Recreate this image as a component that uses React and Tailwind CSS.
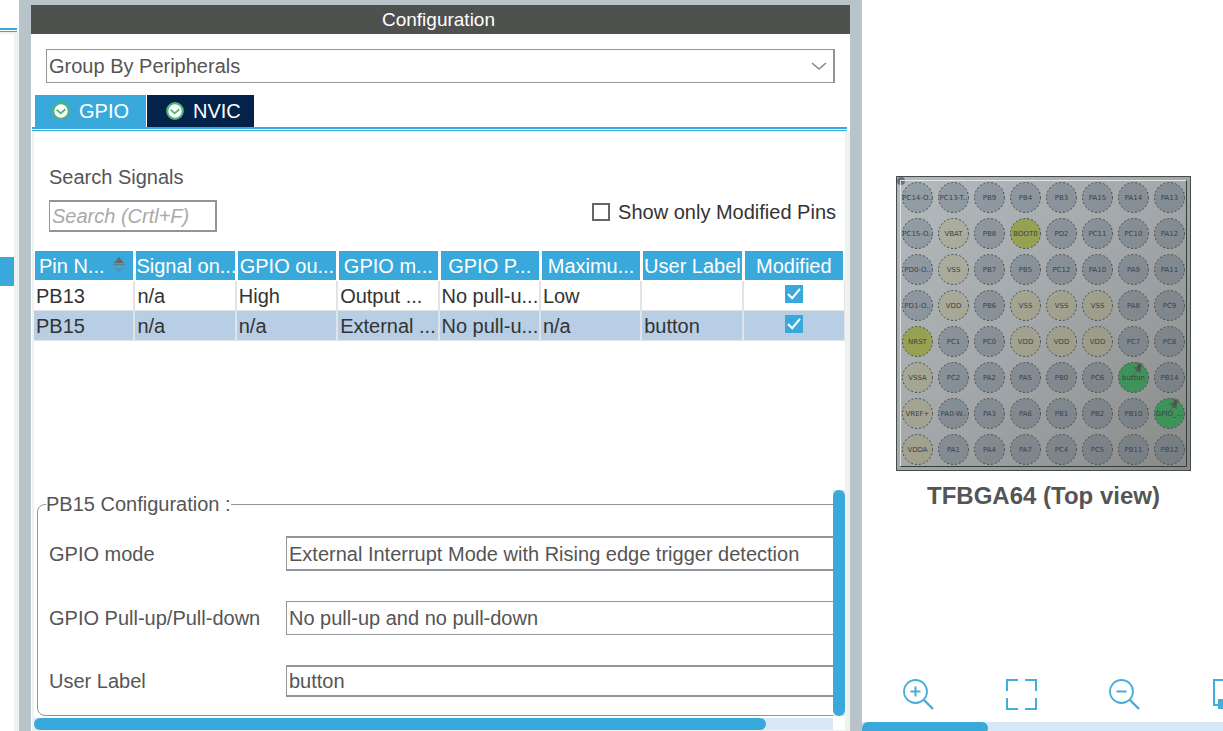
import { useState } from 'react';

// Signal table
const columns = ['Pin N...', 'Signal on...', 'GPIO ou...', 'GPIO m...', 'GPIO P...', 'Maximu...', 'User Label', 'Modified'];

const rows = [
  { cells: ['PB13', 'n/a', 'High', 'Output ...', 'No pull-u...', 'Low', ''], selected: false },
  { cells: ['PB15', 'n/a', 'n/a', 'External ...', 'No pull-u...', 'n/a', 'button'], selected: true },
];

// Ball map of the package, row by row
const balls = [
  ['PC14-O..', 'PC13-T..', 'PB9', 'PB4', 'PB3', 'PA15', 'PA14', 'PA13'],
  ['PC15-O..', 'VBAT', 'PB8', 'BOOT0', 'PD2', 'PC11', 'PC10', 'PA12'],
  ['PD0-O..', 'VSS', 'PB7', 'PB5', 'PC12', 'PA10', 'PA9', 'PA11'],
  ['PD1-O..', 'VDD', 'PB6', 'VSS', 'VSS', 'VSS', 'PA8', 'PC9'],
  ['NRST', 'PC1', 'PC0', 'VDD', 'VDD', 'VDD', 'PC7', 'PC8'],
  ['VSSA', 'PC2', 'PA2', 'PA5', 'PB0', 'PC6', 'button', 'PB14'],
  ['VREF+', 'PA0-W..', 'PA3', 'PA6', 'PB1', 'PB2', 'PB10', 'GPIO_...'],
  ['VDDA', 'PA1', 'PA4', 'PA7', 'PC4', 'PC5', 'PB11', 'PB12'],
];

function ballFill(name) {
  if (name === 'button' || name.startsWith('GPIO')) return '#3f9259';
  if (name === 'BOOT0' || name === 'NRST') return '#96a251';
  if (name.startsWith('V')) return 'url(#power)';
  return 'url(#io)';
}

function CheckBadge() {
  return (
    <svg width="18" height="18" viewBox="0 0 18 18" aria-hidden="true">
      <circle cx="9" cy="9" r="7.8" fill="#fff" stroke="#4fb477" strokeWidth="2.2" />
      <path d="M4.6 7.6 L8.6 11.4 L13.4 7.2" fill="none" stroke="#4fb477" strokeWidth="1.8" />
    </svg>
  );
}

function SortIcon() {
  return (
    <svg width="12" height="17" viewBox="0 0 12 17" aria-hidden="true">
      <path d="M6 0 L11 6 H1 Z" fill="#66696a" />
      <path d="M0 7.5 H12" stroke="#5f7f90" strokeWidth="1.4" />
      <path d="M1 11 H11 L6 16.5 Z" fill="#4b98bd" />
    </svg>
  );
}

function TickBox({ label }) {
  return (
    <label className="inline-flex relative align-middle -mt-[6px]">
      <input type="checkbox" defaultChecked aria-label={label} className="appearance-none w-[18px] h-[18px] bg-[#39a9dc]" />
      <svg className="absolute inset-0 pointer-events-none" width="18" height="18" viewBox="0 0 18 18" aria-hidden="true">
        <path d="M3 9 L7.2 13.2 L15 3.8" fill="none" stroke="#fff" strokeWidth="2" />
      </svg>
    </label>
  );
}

function Pushpin({ x, y }) {
  return (
    <g transform={`translate(${x} ${y})`}>
      <path d="M-5.5 7 L-1.5 2" stroke="#55705f" strokeWidth="1" />
      <path d="M-4.5 -2 L-1 -1.5 L0 -5 L-0.5 -6.5 L5 -4.5 L3.5 -3 L2.5 0 L3 3.5 L-1 2.5 Z" fill="#4c5350" />
      <path d="M-0.5 -6.5 L5 -4.5" stroke="#6b716e" strokeWidth="1.4" />
      <path d="M-4.5 -2 L3 3" stroke="#626966" strokeWidth="1" />
    </g>
  );
}

function Chip() {
  return (
    <svg width="295" height="295" viewBox="0 0 295 295" role="img" aria-label="TFBGA64 package">
      <defs>
        <linearGradient id="body" x1="0" y1="0" x2="1" y2="1">
          <stop offset="0" stopColor="#b3babd" />
          <stop offset="0.5" stopColor="#a3a7a9" />
          <stop offset="1" stopColor="#888988" />
        </linearGradient>
        <linearGradient id="io" gradientUnits="userSpaceOnUse" x1="0" y1="0" x2="295" y2="295">
          <stop offset="0" stopColor="#959fa8" />
          <stop offset="1" stopColor="#757c80" />
        </linearGradient>
        <linearGradient id="power" gradientUnits="userSpaceOnUse" x1="0" y1="0" x2="295" y2="295">
          <stop offset="0" stopColor="#b2b4a5" />
          <stop offset="1" stopColor="#8f8e77" />
        </linearGradient>
      </defs>
      <rect x="0.5" y="0.5" width="294" height="294" fill="url(#body)" stroke="#454a4b" />
      <circle cx="5" cy="5" r="4" fill="#697174" />
      <path d="M4.5 290 V4.5 H290" fill="none" stroke="#e1e5e6" />
      <path d="M4.5 290.5 H290.5 V4.5" fill="none" stroke="#363b3c" />
      {balls.map((line, j) =>
        line.map((name, i) => (
          <g key={`${i}-${j}`}>
            <circle cx={21.5 + i * 36} cy={21.5 + j * 36} r="15" fill={ballFill(name)} stroke="#454c50" strokeDasharray="2 2" />
            <text
              x={21.5 + i * 36}
              y={24 + j * 36}
              textAnchor="middle"
              fontSize="7"
              fontFamily='"DejaVu Sans", sans-serif'
              fill="#3c4245"
            >
              {name}
            </text>
          </g>
        ))
      )}
      <Pushpin x={242} y={193} />
      <Pushpin x={278} y={229} />
    </svg>
  );
}

function Magnifier({ plus }) {
  return (
    <svg width="31" height="31" viewBox="0 0 31 31" fill="none" stroke="#43addd" aria-hidden="true">
      <circle cx="12.5" cy="12.5" r="11.5" strokeWidth="1.8" />
      <path d="M7.5 12.5 H17.5" strokeWidth="2" />
      {plus && <path d="M12.5 7.5 V17.5" strokeWidth="2" />}
      <path d="M20.5 20.5 L30 30" strokeWidth="2.4" />
    </svg>
  );
}

export default function App() {
  const [tab, setTab] = useState('GPIO');

  return (
    <div
      className="flex h-screen overflow-hidden bg-white text-[20px] leading-6 text-[#555]"
      style={{ fontFamily: '"Liberation Sans", Arial, sans-serif' }}
    >
      {/* Edge of the component list */}
      <aside className="w-[19px] shrink-0 flex flex-col">
        <div className="h-7" />
        <div className="h-1 mr-[2px] border-t-2 border-b border-[#39a9dc]" />
        <div className="flex-1 border-r-[5px] border-t-2 border-[#f0f1f1] pt-[223px]">
          <div className="h-[29px] bg-[#39a9dc]" />
        </div>
      </aside>

      {/* Configuration panel */}
      <main className="flex-[819_1_0%] min-w-0 box-content border-x-[12px] border-t-[5px] border-[#b8c4ca] flex flex-col">
        <h1 className="h-[29px] shrink-0 bg-[#4f514f] text-white text-[19px] leading-[30px] text-center pr-1">Configuration</h1>

        <div className="relative mt-[15px] ml-[15px] mr-[15px] shrink-0">
          <select
            aria-label="Group by"
            className="appearance-none block w-full h-[34px] pl-[2px] border border-r-2 border-[#90959b] bg-white"
          >
            <option>Group By Peripherals</option>
          </select>
          <svg className="absolute right-2 top-3 pointer-events-none" width="16" height="10" viewBox="0 0 16 10" aria-hidden="true">
            <path d="M1 2 L8 8 L15 2" fill="none" stroke="#888" strokeWidth="1.6" />
          </svg>
        </div>

        <div className="mt-3 ml-1 flex gap-px shrink-0" role="tablist">
          <button
            role="tab"
            aria-selected={tab === 'GPIO'}
            onClick={() => setTab('GPIO')}
            className="h-8 w-[111px] flex items-center pl-[17px] gap-[9px] bg-[#39a9dc] text-white"
          >
            <CheckBadge />
            GPIO
          </button>
          <button
            role="tab"
            aria-selected={tab === 'NVIC'}
            onClick={() => setTab('NVIC')}
            className="h-8 w-[107px] flex items-center pl-[19px] gap-[9px] bg-[#03234b] text-white"
          >
            <CheckBadge />
            NVIC
          </button>
        </div>
        <div className="h-1 ml-px mr-[3px] shrink-0 border-t-2 border-b border-[#39a9dc]" />

        <section className="flex-1 min-h-0 ml-px border-l-2 border-r-[5px] border-y border-[#f0f1f1] flex flex-col">
          <div className="flex items-end justify-between mt-[33px] ml-[15px] mr-[9px] shrink-0">
            <div>
              <label htmlFor="search" className="block mb-[11px]">Search Signals</label>
              <input
                id="search"
                placeholder="Search (Crtl+F)"
                className="block w-[168px] h-8 pl-[2px] border-2 border-l border-[#90959b] placeholder:italic placeholder:text-[#aaa]"
              />
            </div>
            <label className="flex items-center gap-2 mb-2 text-[#333]">
              <input type="checkbox" className="appearance-none w-[18px] h-[18px] border-2 border-[#666] bg-white" />
              Show only Modified Pins
            </label>
          </div>

          <table className="mt-[19px] w-full shrink-0 table-fixed border-separate border-spacing-0 text-[#333]">
            <thead>
              <tr>
                {columns.map((name, i) => (
                  <th
                    key={name}
                    className="h-[30px] p-0 border-l border-r-2 border-b border-white bg-[#39a9dc] text-white font-normal whitespace-nowrap"
                  >
                    {i === 0 ? (
                      <span className="flex items-center justify-between pl-1 pr-2">
                        {name}
                        <SortIcon />
                      </span>
                    ) : (
                      name
                    )}
                  </th>
                ))}
              </tr>
            </thead>
            <tbody>
              {rows.map((row) => (
                <tr key={row.cells[0]} className={row.selected ? 'bg-[#b8cee5]' : 'bg-white'}>
                  {row.cells.map((cell, i) => (
                    <td key={i} className="h-[30px] p-0 pl-[2px] border-r-2 border-b border-[#e1e4e7] whitespace-nowrap">
                      {cell}
                    </td>
                  ))}
                  <td className="h-[30px] p-0 border-r border-b border-[#e1e4e7] text-center">
                    <TickBox label={`${row.cells[0]} modified`} />
                  </td>
                </tr>
              ))}
            </tbody>
          </table>

          <div className="mt-auto flex shrink-0">
            <div className="flex-1 min-w-0 overflow-hidden">
              <fieldset className="ml-[3px] w-[120%] border border-[#90959b] rounded-lg pl-[11px] pt-[18px] pb-[18px] flex flex-col gap-[30px]">
                <legend className="-ml-[3px] h-7 leading-7">PB15 Configuration :</legend>
                <div className="flex items-center">
                  <label htmlFor="mode" className="w-[237px] shrink-0">GPIO mode</label>
                  <select id="mode" className="appearance-none flex-1 h-[35px] pl-[2px] border border-y-2 border-[#90959b]">
                    <option>External Interrupt Mode with Rising edge trigger detection</option>
                  </select>
                </div>
                <div className="flex items-center">
                  <label htmlFor="pull" className="w-[237px] shrink-0">GPIO Pull-up/Pull-down</label>
                  <select id="pull" className="appearance-none flex-1 h-[34px] pl-[2px] border border-[#90959b]">
                    <option>No pull-up and no pull-down</option>
                  </select>
                </div>
                <div className="flex items-center">
                  <label htmlFor="label" className="w-[237px] shrink-0">User Label</label>
                  <input id="label" defaultValue="button" className="flex-1 h-8 pl-[2px] border border-y-2 border-[#90959b]" />
                </div>
              </fieldset>
            </div>
            <div className="w-3 bg-[#d8e7f5]">
              <div className="h-full rounded-full bg-[#39a9dc]" />
            </div>
          </div>
          <div className="mt-[2px] mr-3 h-3 shrink-0 bg-[#d8e7f5]">
            <div className="h-full w-11/12 rounded-full bg-[#39a9dc]" />
          </div>
        </section>
      </main>

      {/* Package view */}
      <section className="flex-[361_1_0%] min-w-0 flex flex-col overflow-hidden">
        <figure className="mt-[176px] ml-[2px] flex flex-col items-center">
          <Chip />
          <figcaption className="mt-[9px] text-[24px] leading-8 font-bold">TFBGA64 (Top view)</figcaption>
        </figure>
        <div className="mt-auto mb-3 ml-[41px] flex gap-[72px]">
          <button aria-label="Zoom in" className="shrink-0"><Magnifier plus /></button>
          <button aria-label="Best fit" className="shrink-0">
            <svg width="31" height="31" viewBox="0 0 31 31" fill="none" stroke="#43addd" strokeWidth="2" aria-hidden="true">
              <path d="M1 12 V1 H12 M19 1 H30 V12 M30 19 V30 H19 M12 30 H1 V19" />
            </svg>
          </button>
          <button aria-label="Zoom out" className="shrink-0"><Magnifier /></button>
          <button aria-label="Rotate" className="shrink-0">
            <svg width="31" height="31" viewBox="0 0 31 31" aria-hidden="true">
              <path d="M2 1 H19 V26 H2 Z" fill="none" stroke="#43addd" strokeWidth="2" />
              <path d="M6 20 H30 V30 H6 Z" fill="#43addd" />
            </svg>
          </button>
        </div>
        <div className="h-[9px] shrink-0 overflow-hidden bg-[#d8e7f5]">
          <div className="h-3 w-[35%] rounded-r-full rounded-tl-full bg-[#39a9dc]" />
        </div>
      </section>
    </div>
  );
}
